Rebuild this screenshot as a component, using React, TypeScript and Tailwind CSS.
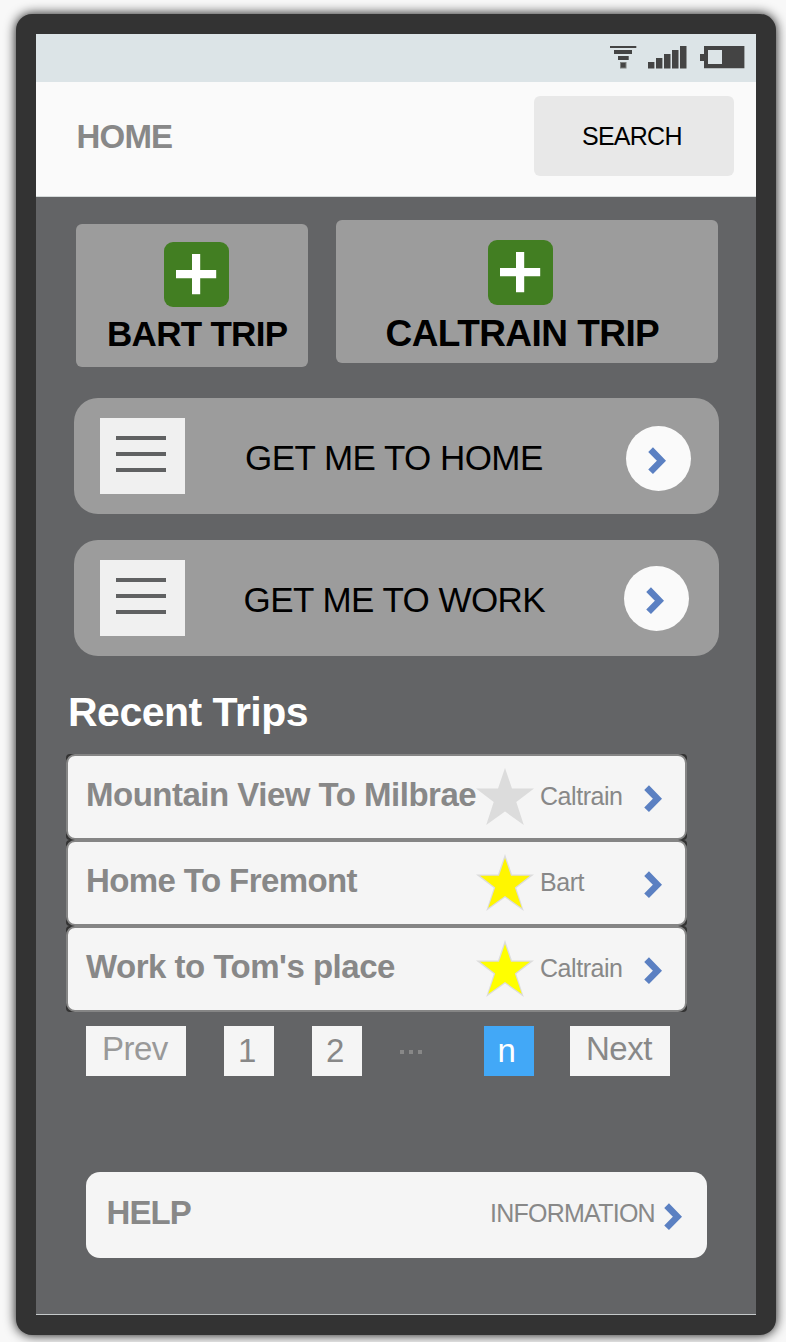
import React from "react";

function Chevron({ className = "" }: { className?: string }) {
  return (
    <svg width="20" height="28" viewBox="0 0 20 28" className={`shrink-0 ${className}`} fill="none">
      <path d="M3.6 2.6 L14.4 13.7 L3.6 24.8" stroke="#5b80c2" strokeWidth="6.6" />
    </svg>
  );
}

function Star({ fill }: { fill: string }) {
  return (
    <svg width="58" height="57" viewBox="0 0 58 57" className="mt-[12px] shrink-0">
      <path
        d="M29 0 L36 20.5 H58 L40.3 34 L47.8 57 L29 43.5 L10.2 57 L17.7 34 L0 20.5 H22 Z"
        fill="#dcdcdc"
      />
      <path
        d="M29 4 L35 21.8 H54 L38.8 33.5 L45.8 54 L29 42 L12.2 54 L19.2 33.5 L4 21.8 H23 Z"
        fill={fill}
      />
    </svg>
  );
}

function StatusBar() {
  return (
    <div className="flex h-12 items-start bg-[#dce4e7]">
      <svg width="136" height="24" viewBox="0 0 136 24" className="ml-[574px] mt-3" fill="#444444">
        <path d="M0 0H26.3V2H0ZM4 4H22V8H4ZM8 10H18.7V14H8Z" />
        <rect x="10" y="16" width="6.5" height="6.5" fill="#7c807f" />
        <rect x="11" y="17" width="4.5" height="4.5" />
        <path d="M38 16H44.4V22.6H38ZM46 12H52.4V22.6H46ZM54 8H60.5V22.6H54ZM62 4H68.5V22.6H62ZM70 0H76.5V22.6H70Z" />
        <path fillRule="evenodd" d="M94 0H134.4V22.3H94V15H90V8H94ZM98 4V18H112V4Z" />
      </svg>
    </div>
  );
}

function PlusTile() {
  return (
    <svg width="65" height="65" viewBox="0 0 65 65" className="shrink-0">
      <rect width="65" height="65" rx="9" fill="#427e22" />
      <path d="M28 12H36.2V28H52.2V36.2H36.2V52.2H28V36.2H12V28H28Z" fill="#fff" />
    </svg>
  );
}

function Shortcut({ label, labelClass, circleClass }: { label: string; labelClass: string; circleClass: string }) {
  return (
    <div className="flex h-[116.5px] w-[644.5px] items-start rounded-[24px] bg-[#9c9c9c]">
      <div className="ml-[26px] mt-5 flex h-[76.3px] w-[84.6px] shrink-0 flex-col gap-3 bg-[#f0f0f0] pl-4 pt-[18px]">
        <div className="h-1 w-[50px] bg-[#606162]" />
        <div className="h-1 w-[50px] bg-[#606162]" />
        <div className="h-1 w-[50px] bg-[#606162]" />
      </div>
      <div className={`mt-[42.5px] shrink-0 text-[35px] leading-none text-black ${labelClass}`}>{label}</div>
      <div className={`h-[65px] w-[65px] shrink-0 rounded-full bg-[#fafafa] pl-[21.5px] pt-[20.8px] ${circleClass}`}>
        <Chevron />
      </div>
    </div>
  );
}

const trips = [
  { title: "Mountain View To Milbrae", line: "Caltrain", star: "#dcdcdc", tracking: "tracking-[-0.5px]" },
  { title: "Home To Fremont", line: "Bart", star: "#fff600", tracking: "tracking-[-0.6px]" },
  { title: "Work to Tom's place", line: "Caltrain", star: "#ffff00", tracking: "tracking-[-0.5px]" },
];

function TripRow({ title, line, star, tracking }: { title: string; line: string; star: string; tracking: string }) {
  return (
    <div className="h-[86px] w-[620.5px] rounded-[4px] bg-[#333]">
      <div className="flex h-full items-start rounded-[9px] border-2 border-[#858585] bg-[#f5f5f5]">
        <div
          className={`ml-[18px] mt-[22px] w-[390px] shrink-0 text-[33px] font-bold leading-none text-[#888] ${tracking}`}
        >
          {title}
        </div>
        <Star fill={star} />
        <div className="ml-[6px] mt-[28px] w-[103px] shrink-0 text-[25px] leading-none tracking-[-0.45px] text-[#888]">
          {line}
        </div>
        <Chevron className="mt-[29px]" />
      </div>
    </div>
  );
}

export default function App() {
  return (
    <div className="h-[1342px] w-[786px] overflow-hidden whitespace-nowrap bg-[#f8f8f8] pl-4 pt-[14px] font-['Liberation_Sans',Arial,sans-serif]">
      <div className="h-[1320.5px] w-[760px] rounded-[16px] bg-[#333] p-5 shadow-[0_0_12px_rgba(0,0,0,0.95)]">
        <div className="flex h-[1280.5px] w-[720px] flex-col border-b border-[#c5c9ca] bg-[#636466]">
          <StatusBar />
          <header className="flex h-[115px] items-start border-b border-[#d5dada] bg-[#fafafa]">
            <h1 className="ml-[40.5px] mt-[38px] w-[457.5px] text-[33px] font-bold leading-none tracking-[-0.8px] text-[#888]">
              HOME
            </h1>
            <button className="mt-[14px] flex h-20 w-[200px] items-start rounded-[6px] bg-[#e8e8e8] pl-[48px] pt-[27.5px] text-[25px] leading-none tracking-[-0.75px] text-black">
              SEARCH
            </button>
          </header>

          <div className="flex items-start gap-7 pl-10 pt-[23px]">
            <div className="mt-1 h-[142.7px] w-[232px] rounded-[6px] bg-[#9c9c9c]">
              <div className="ml-[88px] mt-[18px] h-[65px]"><PlusTile /></div>
              <div className="ml-[31px] mt-[9.3px] text-[35px] font-bold leading-none tracking-[-0.7px] text-black">
                BART TRIP
              </div>
            </div>
            <div className="h-[142.7px] w-[382px] rounded-[6px] bg-[#9c9c9c]">
              <div className="ml-[152px] mt-5 h-[65px]"><PlusTile /></div>
              <div className="ml-[49.5px] mt-[9.5px] text-[37px] font-bold leading-none tracking-[-0.55px] text-black">
                CALTRAIN TRIP
              </div>
            </div>
          </div>

          <div className="ml-[38px] mt-[31.3px] flex flex-col gap-[25.5px]">
            <Shortcut
              label="GET ME TO HOME"
              labelClass="ml-[60.5px] w-[380.9px] tracking-[-0.55px]"
              circleClass="mt-7"
            />
            <Shortcut
              label="GET ME TO WORK"
              labelClass="ml-[59px] w-[380.4px] tracking-[-0.55px]"
              circleClass="mt-[26px]"
            />
          </div>

          <h2 className="ml-[32px] mt-[36px] h-[61.5px] text-[41px] font-bold leading-none tracking-[-0.5px] text-white">
            Recent Trips
          </h2>

          <div className="ml-[30px] flex flex-col">
            {trips.map((t) => (
              <TripRow key={t.title} {...t} />
            ))}
          </div>

          <nav className="ml-[50px] mt-[14px] flex h-[50px] items-start text-[33px] leading-none tracking-[-0.5px] text-[#888]">
            <div className="h-[50px] w-[100px] bg-[#f5f5f5] pl-[16px] pt-[6px] text-[#999]">Prev</div>
            <div className="ml-[38px] h-[50px] w-[50px] bg-[#f5f5f5] pl-[14px] pt-2">1</div>
            <div className="ml-[38px] h-[50px] w-[50px] bg-[#f5f5f5] pl-[14px] pt-2">2</div>
            <div className="ml-[38px] flex h-[50px] w-[84px] items-start gap-[5px] pt-6">
              <span className="h-1 w-1 bg-[#888]" />
              <span className="h-1 w-1 bg-[#888]" />
              <span className="h-1 w-1 bg-[#888]" />
            </div>
            <div className="h-[50px] w-[50px] bg-[#42a8f7] pl-[13.5px] pt-2 text-white">n</div>
            <div className="ml-9 h-[50px] w-[100px] bg-[#f5f5f5] pl-[16px] pt-[6px]">Next</div>
          </nav>

          <div className="ml-[50px] mt-24 flex h-[86px] w-[621px] items-start rounded-[14px] bg-[#f5f5f5] text-[#888]">
            <div className="ml-[20.5px] mt-[24px] w-[383.5px] text-[33px] font-bold leading-none tracking-[-0.9px]">HELP</div>
            <div className="mt-[29px] w-[173px] text-[25px] leading-none tracking-[-0.75px]">INFORMATION</div>
            <Chevron className="mt-[31px]" />
          </div>
        </div>
      </div>
    </div>
  );
}
